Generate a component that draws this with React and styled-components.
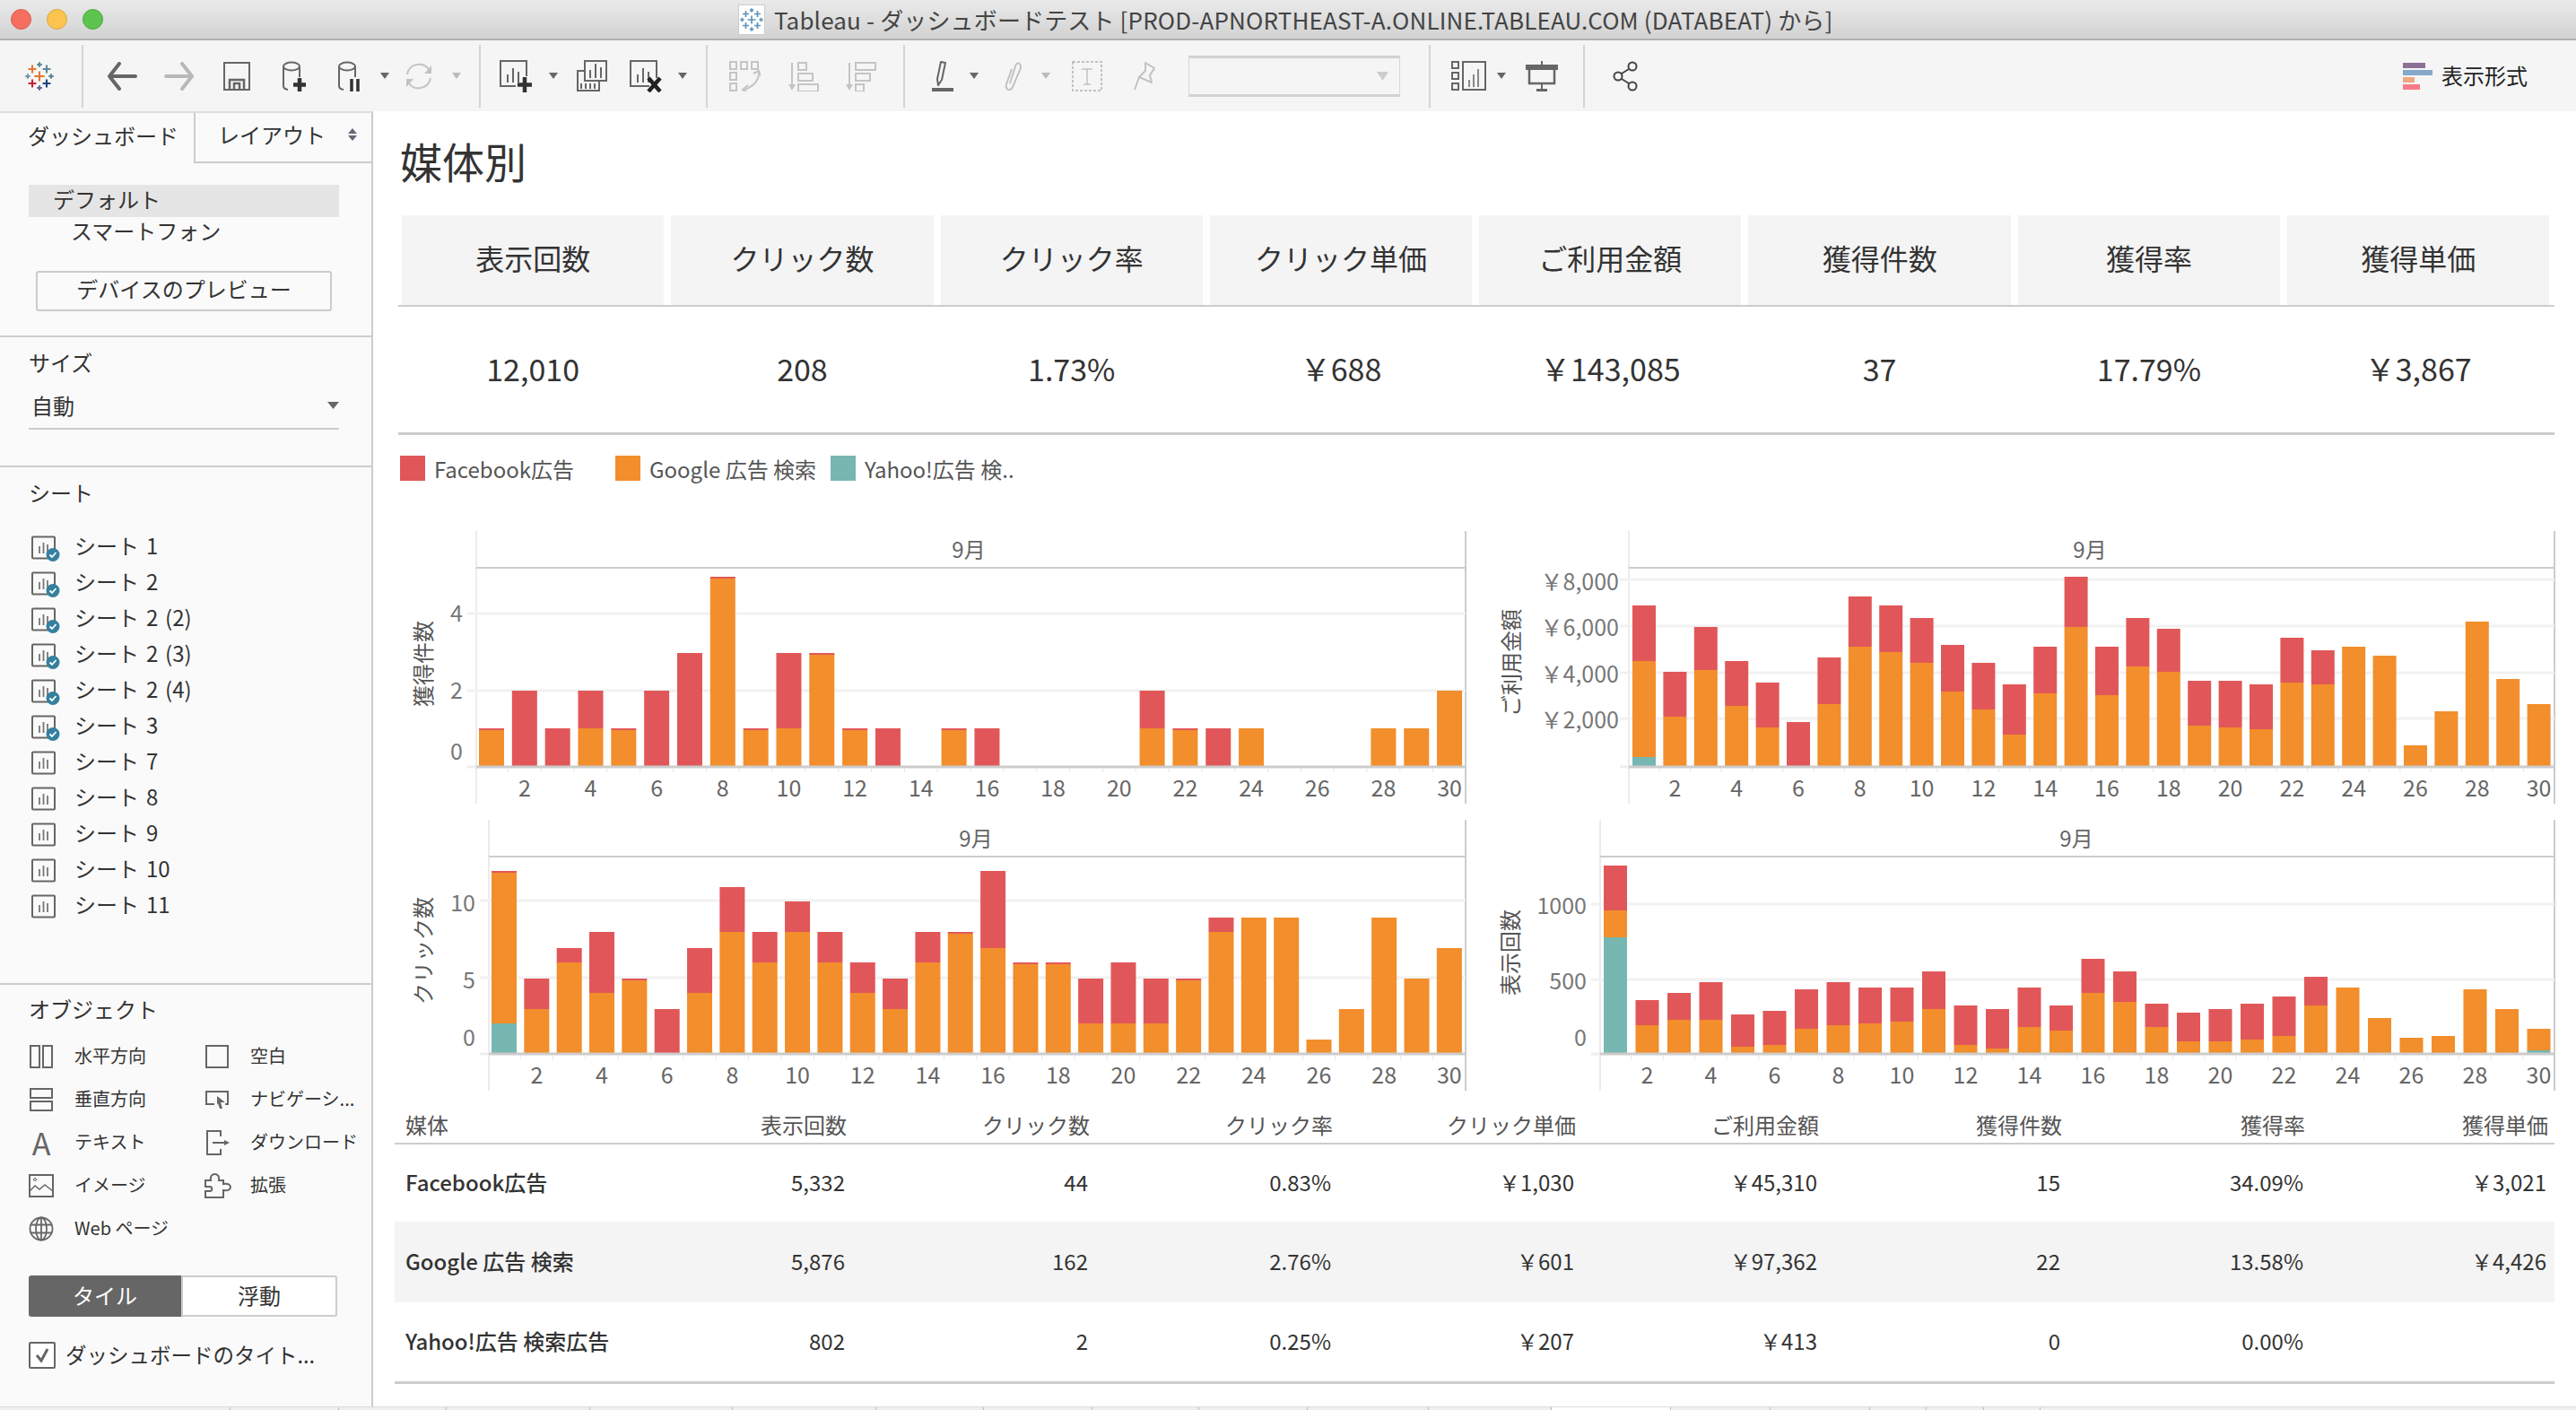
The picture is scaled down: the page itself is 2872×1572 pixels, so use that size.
import React from "react";
import styled, { createGlobalStyle } from "styled-components";

const FONT = '"Noto Sans CJK JP", "Noto Sans", sans-serif';
const RED = "#e15759";
const ORANGE = "#f28e2b";
const TEAL = "#76b7b2";

const GlobalStyle = createGlobalStyle`
  html, body {
    margin: 0;
    padding: 0;
    background: #fff;
  }
  * {
    box-sizing: border-box;
  }
  #root {
    width: 2872px;
    height: 1572px;
    overflow: hidden;
    font-family: ${FONT};
  }
`;

const Window = styled.div`
  width: 2872px;
  height: 1572px;
  display: flex;
  flex-direction: column;
  overflow: hidden;
  background: #fff;
  color: #333;
`;

const TitleBar = styled.div`
  height: 45px;
  flex: none;
  display: flex;
  align-items: center;
  background: linear-gradient(#eaeaea, #d2d2d2);
  border-bottom: 2px solid #b1b1b1;
  padding-left: 12px;
`;

const Light = styled.span`
  width: 23px;
  height: 23px;
  margin-right: 17px;
  border-radius: 50%;
  background: ${(p) => p.$color};
  border: 1px solid ${(p) => p.$edge};
`;

const TitleCenter = styled.div`
  display: flex;
  align-items: center;
  margin-left: 691px;
  font-size: 26px;
  letter-spacing: 0.15px;
  color: #444;
  white-space: nowrap;
`;

const TitleIcon = styled.span`
  width: 30px;
  height: 34px;
  margin-right: 10px;
  display: flex;
  align-items: center;
  justify-content: center;
  background: #fff;
  border: 1px solid #ccc;
`;

const Toolbar = styled.div`
  height: 79px;
  flex: none;
  display: flex;
  align-items: center;
  padding: 0 54px 0 28px;
  background: #f5f5f5;
`;

const Slot = styled.span`
  display: flex;
  flex: none;
  margin-left: ${(p) => p.$gap || 0}px;
`;

const ToolSep = styled.span`
  width: 2px;
  height: 70px;
  flex: none;
  margin-left: ${(p) => p.$gap}px;
  background: #d4d4d4;
`;

const SelectBox = styled.div`
  width: 236px;
  height: 46px;
  flex: none;
  margin-left: 36px;
  display: flex;
  align-items: center;
  justify-content: flex-end;
  padding-right: 12px;
  border: 1px solid #d8d8d8;
  border-top: 3px solid #d2d2d2;
  border-bottom: 3px solid #d2d2d2;
`;

const ShowMe = styled.div`
  margin-left: auto;
  display: flex;
  align-items: center;
  gap: 10px;
  font-size: 24px;
  color: #222;
`;

const ShowMeBars = styled.div`
  width: 33px;
  display: flex;
  flex-direction: column;
  gap: 2px;
`;

const ShowMeBar = styled.span`
  height: 6px;
  width: ${(p) => p.$w}px;
  background: ${(p) => p.$color};
`;

const ShowMeText = styled.span`
  padding-bottom: 3px;
`;

const Body = styled.div`
  flex: 1;
  display: flex;
  min-height: 0;
`;

const Sidebar = styled.aside`
  width: 416px;
  flex: none;
  background: #fafafa;
  border-top: 2px solid #ddd;
  border-right: 2px solid #ccc;
  font-size: 24px;
  color: #333;
`;

const TabRow = styled.div`
  display: flex;
  height: 56px;
`;

const ActiveTab = styled.div`
  width: 216px;
  padding: 0 0 7px 31px;
  display: flex;
  align-items: center;
`;

const Tab = styled.div`
  flex: 1;
  display: flex;
  align-items: center;
  justify-content: space-between;
  padding: 0 16px 7px 25px;
  border-left: 2px solid #ccc;
  border-bottom: 2px solid #ccc;
`;

const Section = styled.section`
  display: flow-root;
  padding-top: ${(p) => p.$top || 0}px;
  height: ${(p) => p.$h}px;
  border-bottom: 2px solid #ccc;
`;

const LastSection = styled.section`
  padding-top: 11px;
`;

const LayoutItem = styled.div`
  height: ${(p) => p.$h}px;
  margin: ${(p) => p.$mt}px 36px 0 32px;
  padding: 0 0 6px ${(p) => p.$indent}px;
  display: flex;
  align-items: center;
  background: ${(p) => (p.$selected ? "#e5e5e5" : "transparent")};
`;

const PreviewButton = styled.button`
  display: block;
  width: 330px;
  height: 45px;
  margin: 26px 0 0 40px;
  padding: 0 0 6px;
  border: 2px solid #ccc;
  border-radius: 3px;
  background: transparent;
  font: inherit;
  color: #333;
`;

const SectionLabel = styled.div`
  height: 34px;
  padding: 0 0 4px 32px;
  display: flex;
  align-items: center;
`;

const SizeSelect = styled.div`
  height: 49px;
  margin: 8px 36px 0 32px;
  padding: 0 0 4px 3px;
  display: flex;
  align-items: center;
  justify-content: space-between;
  border-bottom: 2px solid #ccc;
`;

const SheetList = styled.div`
  margin-top: 23px;
`;

const SheetRow = styled.div`
  height: 40px;
  padding-left: 35px;
  display: flex;
  align-items: center;
  gap: 16px;
  line-height: 36px;
`;

const SheetName = styled.span`
  padding-bottom: 4px;
  word-spacing: 2.5px;
`;

const ObjectGrid = styled.div`
  margin-top: 11px;
  display: grid;
  grid-template-columns: 196px 1fr;
  grid-auto-rows: 48px;
  padding-left: 32px;
`;

const ObjectItem = styled.div`
  display: flex;
  align-items: center;
  font-size: 20px;
  white-space: nowrap;
`;

const ObjectIcon = styled.span`
  width: 51px;
  flex: none;
  display: flex;
  align-items: center;
`;

const ObjectName = styled.span`
  padding-bottom: 3px;
`;

const LetterIcon = styled.span`
  width: 28px;
  text-align: center;
  font-size: 34px;
  line-height: 34px;
  color: #666;
`;

const ToggleRow = styled.div`
  display: flex;
  width: 344px;
  height: 46px;
  margin: 28px 0 0 32px;
`;

const ToggleButton = styled.div`
  flex: 1;
  display: flex;
  align-items: center;
  justify-content: center;
  padding-bottom: 3px;
  font-size: 24px;
  background: ${(p) => (p.$on ? "#666" : "#fff")};
  color: ${(p) => (p.$on ? "#fff" : "#333")};
  border: ${(p) => (p.$on ? "none" : "2px solid #ccc")};
  border-radius: ${(p) => (p.$on ? "3px 0 0 3px" : "0 3px 3px 0")};
`;

const CheckRow = styled.div`
  display: flex;
  align-items: center;
  gap: 11px;
  height: 30px;
  margin: 28px 0 0 32px;
  white-space: nowrap;
`;

const CheckBox = styled.span`
  width: 30px;
  height: 30px;
  display: flex;
  align-items: center;
  justify-content: center;
  background: #fff;
  border: 2px solid #666;
  border-radius: 2px;
`;

const CheckText = styled.span`
  font-size: 23.5px;
  padding-bottom: 3px;
`;

const Main = styled.main`
  flex: 1;
  min-width: 0;
  padding: 0 24px 0 28px;
  display: flex;
  flex-direction: column;
`;

const DashTitle = styled.h1`
  height: 116px;
  flex: none;
  margin: 0;
  padding: 0 0 8px 2px;
  display: flex;
  align-items: center;
  font-size: 47px;
  font-weight: 400;
  color: #333;
`;

const KpiRow = styled.div`
  display: grid;
  grid-template-columns: repeat(8, 292.3px);
  column-gap: 8px;
  padding-left: 4px;
  flex: none;
  height: ${(p) => p.$h}px;
  border-bottom: ${(p) => p.$line}px solid #ccc;
`;

const KpiHead = styled.div`
  display: flex;
  align-items: center;
  justify-content: center;
  padding-bottom: 7px;
  background: #f4f4f4;
  font-size: 32px;
  color: #333;
`;

const KpiValue = styled.div`
  display: flex;
  align-items: center;
  justify-content: center;
  padding-bottom: 3px;
  font-size: 34px;
  color: #333;
`;

const Legend = styled.div`
  display: flex;
  height: 28px;
  flex: none;
  margin: 23px 0 56px 2px;
`;

const LegendItem = styled.div`
  width: 240px;
  display: flex;
  align-items: center;
  gap: 10px;
  font-size: 24px;
  color: #555;
  white-space: nowrap;
`;

const Swatch = styled.span`
  width: 28px;
  height: 28px;
  background: ${(p) => p.$color};
`;

const ChartGrid = styled.div`
  display: grid;
  grid-template-columns: 1196px 1208px;
  grid-auto-rows: 322px;
  flex: none;
`;

const ChartSvg = styled.svg`
  display: block;
  font-family: ${FONT};
  overflow: visible;
`;

const AxisText = styled.text`
  font-size: ${(p) => p.$size || 25}px;
  fill: ${(p) => p.$color || "#666"};
  dominant-baseline: central;
`;

const Table = styled.div`
  margin-left: -4px;
  flex: none;
  font-size: 24px;
  color: #333;
`;

const TableRow = styled.div`
  display: grid;
  grid-template-columns: 233px repeat(8, 271px);
  align-items: center;
  height: ${(p) => p.$h}px;
  padding-bottom: ${(p) => (p.$head ? 4 : 3)}px;
  background: ${(p) => (p.$shade ? "#f4f4f4" : "transparent")};
  border-bottom: ${(p) => p.$line || 0}px solid #ccc;
  color: ${(p) => (p.$head ? "#555" : "#333")};
`;

const NameCell = styled.div`
  padding-left: 12px;
  white-space: nowrap;
  font-weight: ${(p) => (p.$head ? 400 : 500)};
`;

const NumCell = styled.div`
  text-align: right;
  padding-right: ${(p) => (p.$head ? 0 : 2)}px;
`;

const BottomStrip = styled.div`
  height: 4px;
  flex: none;
  display: flex;
  background: #efefef;
  border-top: 1px solid #ddd;
`;

const StripTab = styled.span`
  flex: none;
  border-right: 1px solid #bbb;
  background: ${(p) => (p.$active ? "#fff" : "transparent")};
`;

const Caret = ({ color = "#666", w = 10, h = 7 }) => (
  <svg width={w} height={h} viewBox="0 0 10 7" preserveAspectRatio="none">
    <path d="M0 0H10L5 7Z" fill={color} />
  </svg>
);

const LOGO_CROSSES = [
  [16, 3, 2.8, "#5b879b"],
  [8, 8, 4.4, "#e8762d"],
  [24, 8, 4.4, "#5b879b"],
  [16, 16, 5.6, "#e8762d"],
  [3, 16, 2.8, "#7099a6"],
  [29, 16, 2.8, "#59879b"],
  [8, 24, 4.4, "#c72035"],
  [24, 24, 4.4, "#1f457e"],
  [16, 29, 2.8, "#5c6692"],
];

const TableauLogo = ({ size = 32, mono }) => (
  <svg width={size} height={size} viewBox="0 0 32 32">
    {LOGO_CROSSES.map(([x, y, r, c]) => (
      <path
        key={`${x}-${y}`}
        d={`M${x - r} ${y}H${x + r}M${x} ${y - r}V${y + r}`}
        stroke={mono ? "#5d93bd" : c}
        strokeWidth="2.1"
      />
    ))}
  </svg>
);

const Back = ({ color, flip }) => (
  <svg width="34" height="32" viewBox="0 0 34 32" style={flip ? { transform: "scaleX(-1)" } : undefined}>
    <path d="M14 2L3 16L14 30M3 16H32" fill="none" stroke={color} strokeWidth="4" strokeLinecap="round" strokeLinejoin="round" />
  </svg>
);

const SaveIcon = () => (
  <svg width="30" height="32" viewBox="0 0 30 32" fill="none" stroke="#666">
    <rect x="1" y="1" width="28" height="30" strokeWidth="2" />
    <path d="M7 30V20H23V30" strokeWidth="2.5" />
    <path d="M12 30V24H18V30" strokeWidth="2.5" />
  </svg>
);

const Cylinder = () => (
  <>
    <ellipse cx="11" cy="6" rx="9" ry="4.5" fill="none" stroke="#666" strokeWidth="2" />
    <path d="M2 6V28Q2 31 7 32M20 6V18" fill="none" stroke="#666" strokeWidth="2" />
  </>
);

const SourcePlus = () => (
  <svg width="28" height="34" viewBox="0 0 28 34">
    <Cylinder />
    <path d="M20 19V34M13 26.5H27" stroke="#333" strokeWidth="4.5" />
  </svg>
);

const SourcePause = () => (
  <svg width="26" height="34" viewBox="0 0 26 34">
    <Cylinder />
    <path d="M16 20V34M23 20V34" stroke="#333" strokeWidth="3.5" />
  </svg>
);

const Refresh = () => (
  <svg width="32" height="32" viewBox="0 0 32 32" fill="none" stroke="#c2c2c2" strokeWidth="2">
    <path d="M3 14A13.5 13.5 0 0 1 27 8M29 18A13.5 13.5 0 0 1 5 24" />
    <path d="M30 4V13H22ZM2 28V19H10Z" fill="#c2c2c2" stroke="none" />
  </svg>
);

const Bars = ({ x, y, color = "#666" }) => (
  <path d={`M${x} ${y}v-9M${x + 6} ${y}v-16M${x + 12} ${y}v-12`} stroke={color} strokeWidth="2" />
);

const NewSheet = () => (
  <svg width="36" height="36" viewBox="0 0 36 36" fill="none">
    <path d="M18 29H1V1H30V18" stroke="#666" strokeWidth="2" />
    <Bars x={9} y={25} />
    <path d="M28 19V36M20 27.5H36" stroke="#333" strokeWidth="4.5" />
  </svg>
);

const DuplicateSheet = () => (
  <svg width="34" height="36" viewBox="0 0 34 36" fill="none">
    <path d="M8 12H1V34H25V24" stroke="#666" strokeWidth="2" />
    <path d="M5 32v-6M10 32v-6M15 32v-6M20 32v-6" stroke="#666" strokeWidth="2" />
    <rect x="9" y="1" width="24" height="22" stroke="#666" strokeWidth="2" fill="#f5f5f5" />
    <Bars x={15} y={20} />
  </svg>
);

const DeleteSheet = () => (
  <svg width="37" height="36" viewBox="0 0 37 36" fill="none">
    <path d="M22 29H1V1H30V20" stroke="#666" strokeWidth="2" />
    <Bars x={9} y={25} />
    <path d="M21 20L34 35M34 20L21 35" stroke="#222" strokeWidth="4.5" />
  </svg>
);

const SwapIcon = () => (
  <svg width="35" height="34" viewBox="0 0 35 34" fill="none" stroke="#c4c4c4" strokeWidth="2">
    <rect x="1" y="1" width="7" height="8" />
    <rect x="13" y="1" width="7" height="8" />
    <rect x="25" y="1" width="7" height="8" />
    <rect x="1" y="13" width="7" height="8" />
    <rect x="1" y="25" width="7" height="8" />
    <path d="M33 13Q33 26 17 32" />
    <path d="M27 14L33 11L35 17M21 27L15 32L20 35" />
  </svg>
);

const SortIcon = ({ widths }) => (
  <svg width="34" height="34" viewBox="0 0 34 34" fill="none" stroke="#c4c4c4" strokeWidth="2">
    <path d="M4 2V30" />
    <path d="M0 26H8L4 33Z" fill="#c4c4c4" stroke="none" />
    {widths.map((w, i) => (
      <rect key={w} x="11" y={2 + i * 12} width={w} height="8" />
    ))}
  </svg>
);

const PenIcon = () => (
  <svg width="24" height="34" viewBox="0 0 24 34" fill="none">
    <path d="M10 1L6 20L7 27L11 21L15 2Z" stroke="#666" strokeWidth="2" strokeLinejoin="round" />
    <rect y="30" width="24" height="4" fill="#666" />
  </svg>
);

const ClipIcon = () => (
  <svg width="24" height="34" viewBox="0 0 24 34" fill="none" stroke="#bdbdbd" strokeWidth="1.8">
    <path d="M9 25L15 6Q16.5 1.5 19 2.5Q22 4 20.5 9L12 29Q10 33 7 32Q4 31 5 26L11 9" />
  </svg>
);

const TextBoxIcon = () => (
  <svg width="34" height="34" viewBox="0 0 34 34" fill="none" stroke="#c2c2c2" strokeWidth="2">
    <rect x="1" y="1" width="32" height="32" strokeDasharray="3 2" />
    <path d="M11 9H23M17 9V26M13 26H21" strokeWidth="1.5" />
  </svg>
);

const PinIcon = () => (
  <svg width="26" height="34" viewBox="0 0 26 34" fill="none" stroke="#c2c2c2" strokeWidth="2">
    <path d="M14 2L24 8L19 16L21 24L7 18L14 11ZM7 18L2 32" strokeLinejoin="round" />
  </svg>
);

const FitIcon = () => (
  <svg width="39" height="34" viewBox="0 0 39 34" fill="none" stroke="#666" strokeWidth="2">
    <rect x="1" y="1" width="7" height="7" />
    <rect x="1" y="13" width="7" height="7" />
    <rect x="1" y="25" width="7" height="7" />
    <rect x="13" y="1" width="25" height="31" />
    <path d="M20 29v-8M25 29v-14M30 29v-20" strokeWidth="1.5" />
  </svg>
);

const PresentIcon = () => (
  <svg width="36" height="34" viewBox="0 0 36 34" fill="none">
    <rect y="4" width="36" height="6" fill="#666" />
    <path d="M4 10V25H32V10" stroke="#666" strokeWidth="2.5" />
    <path d="M18 0V4M18 25V32" stroke="#666" strokeWidth="2" />
    <rect x="12" y="31" width="12" height="3" fill="#666" />
  </svg>
);

const ShareIcon = () => (
  <svg width="30" height="34" viewBox="0 0 30 34" fill="none" stroke="#444" strokeWidth="2">
    <circle cx="23" cy="6" r="4.5" />
    <circle cx="7" cy="17" r="4.5" />
    <circle cx="23" cy="28" r="4.5" />
    <path d="M11 14L19 9M11 20L19 25" />
  </svg>
);

const SheetIcon = ({ checked }) => (
  <svg width="32" height="32" viewBox="0 0 32 32" fill="none">
    <rect x="1" y="4.5" width="25" height="24" stroke="#666" strokeWidth="2" rx="1" />
    <path d="M9 23v-8M13.5 23v-12M18 23v-10" stroke="#777" strokeWidth="1.8" />
    {checked && (
      <>
        <circle cx="24" cy="24.5" r="7.5" fill="#35809f" />
        <path d="M20.5 24.5L23 27L27.5 22" stroke="#fff" strokeWidth="1.8" />
      </>
    )}
  </svg>
);

const SplitIcon = ({ vertical }) => (
  <svg width="28" height="28" viewBox="0 0 28 28" fill="none" stroke="#666" strokeWidth="2">
    {vertical ? (
      <>
        <rect x="2" y="2" width="24" height="10" />
        <rect x="2" y="16" width="24" height="10" />
      </>
    ) : (
      <>
        <rect x="2" y="2" width="10" height="24" />
        <rect x="16" y="2" width="10" height="24" />
      </>
    )}
  </svg>
);

const BlankIcon = () => (
  <svg width="28" height="28" viewBox="0 0 28 28" fill="none" stroke="#666" strokeWidth="2">
    <rect x="2" y="2" width="24" height="24" />
  </svg>
);

const NavIcon = () => (
  <svg width="28" height="24" viewBox="0 0 28 24" fill="none">
    <path d="M11 17H2V3H26V17H23" stroke="#666" strokeWidth="2" />
    <path d="M14 8L23 15H18L20 22L17 22L15 16L14 18Z" fill="#666" />
  </svg>
);

const DownloadIcon = () => (
  <svg width="28" height="30" viewBox="0 0 28 30" fill="none" stroke="#666" strokeWidth="2">
    <path d="M18 8V2H3V28H18V22" />
    <path d="M9 15H23" />
    <path d="M22 12L28 15L22 18Z" fill="#666" stroke="none" />
  </svg>
);

const ImageIcon = () => (
  <svg width="28" height="26" viewBox="0 0 28 26" fill="none" stroke="#666" strokeWidth="2">
    <rect x="1" y="1" width="26" height="24" />
    <path d="M1 19L7 13L12 17L18 12L27 19" strokeWidth="1.5" />
    <circle cx="7" cy="6" r="1.5" strokeWidth="1" />
  </svg>
);

const PuzzleIcon = () => (
  <svg width="30" height="29" viewBox="0 0 30 29" fill="none" stroke="#666" strokeWidth="2">
    <path d="M1 8H7C6 3 9 1 11.5 1S17 3 16 8H21V12C26 11 29 13 29 15.5S26 20 21 19V27H1V20H6C9 20 9 15 6 15H1Z" />
  </svg>
);

const GlobeIcon = () => (
  <svg width="28" height="28" viewBox="0 0 28 28" fill="none" stroke="#666" strokeWidth="1.8">
    <circle cx="14" cy="14" r="12.5" />
    <ellipse cx="14" cy="14" rx="6" ry="12.5" />
    <path d="M14 1.5V26.5M2.5 9.5H25.5M2.5 18.5H25.5" />
  </svg>
);

const CheckMark = () => (
  <svg width="18" height="18" viewBox="0 0 18 18" fill="none">
    <path d="M3 9L8 15L15 2" stroke="#666" strokeWidth="3" />
  </svg>
);

const SortArrows = () => (
  <svg width="10" height="14" viewBox="0 0 10 14">
    <path d="M0 6L5 0L10 6ZM0 8H10L5 14Z" fill="#667" />
  </svg>
);

const SHEETS = [
  ["シート 1", true],
  ["シート 2", true],
  ["シート 2 (2)", true],
  ["シート 2 (3)", true],
  ["シート 2 (4)", true],
  ["シート 3", true],
  ["シート 7", false],
  ["シート 8", false],
  ["シート 9", false],
  ["シート 10", false],
  ["シート 11", false],
];

const HEADINGS = ["表示回数", "クリック数", "クリック率", "クリック単価", "ご利用金額", "獲得件数", "獲得率", "獲得単価"];
const TOTALS = ["12,010", "208", "1.73%", "\uFFE5688", "\uFFE5143,085", "37", "17.79%", "\uFFE53,867"];
const ROWS = [
  ["Facebook広告", "5,332", "44", "0.83%", "\uFFE51,030", "\uFFE545,310", "15", "34.09%", "\uFFE53,021"],
  ["Google 広告 検索", "5,876", "162", "2.76%", "\uFFE5601", "\uFFE597,362", "22", "13.58%", "\uFFE54,426"],
  ["Yahoo!広告 検索広告", "802", "2", "0.25%", "\uFFE5207", "\uFFE5413", "0", "0.00%", ""],
];

// bar stacks are cumulative pixel heights: teal, orange, red
const only = (o) => [0, o, o];
const red = (r) => [0, 0, r];
const both = (o, r) => [0, o, r];
const NONE = [0, 0, 0];

const ACQUIRED = [
  both(40, 42), red(84), red(42), both(42, 84), both(40, 42), red(84), red(126), both(209, 211), both(40, 42), both(42, 126),
  both(124, 126), both(40, 42), red(42), NONE, both(40, 42), red(42), NONE, NONE, NONE, NONE,
  both(42, 84), both(40, 42), red(42), only(42), NONE, NONE, NONE, only(42), only(42), only(84),
];
const SPEND = [
  [10, 117, 179], both(55, 105), both(107, 155), both(67, 117), both(43, 93), red(49), both(69, 121), both(133, 189), both(127, 179), both(115, 165),
  both(83, 135), both(63, 115), both(35, 91), both(81, 133), both(155, 211), both(79, 133), both(111, 165), both(105, 153), both(45, 95), both(43, 95),
  both(41, 91), both(93, 143), both(91, 129), only(133), only(123), only(23), only(61), only(161), only(97), only(69),
];
const CLICKS = [
  [33, 201, 203], both(49, 83), both(101, 117), both(67, 135), both(81, 83), red(49), both(67, 117), both(135, 185), both(101, 135), both(135, 169),
  both(101, 135), both(67, 101), both(49, 83), both(101, 135), both(133, 135), both(117, 203), both(99, 101), both(99, 101), both(33, 83), both(33, 101),
  both(33, 83), both(81, 83), both(135, 151), only(151), only(151), only(15), only(49), only(151), only(83), only(117),
];
const IMPRESSIONS = [
  [129, 159, 209], both(31, 59), both(37, 67), both(37, 79), both(7, 43), both(9, 47), both(27, 71), both(31, 79), both(33, 73), both(35, 73),
  both(49, 91), both(9, 53), both(5, 49), both(29, 73), both(25, 53), both(67, 105), both(57, 91), both(29, 55), both(13, 45), both(13, 49),
  both(15, 55), both(19, 63), both(53, 85), only(73), only(39), only(17), only(19), only(71), only(49), [3, 27, 27],
];

const CHARTS = [
  {
    title: "獲得件数", data: ACQUIRED, width: 1196, axis: 87, right: 1190, start: 90, pitch: 36.83, bar: 28, base: 262,
    grid: [92, 178], ticks: [["4", 90], ["2", 176], ["0", 244]], labelX: 72, titleX: 26, titleY: 148, monthX: 636,
  },
  {
    title: "ご利用金額", data: SPEND, width: 1208, axis: 176, right: 1208, start: 180, pitch: 34.4, bar: 26, base: 262,
    grid: [54, 106, 158, 209], ticks: [["\uFFE58,000", 55], ["\uFFE56,000", 106], ["\uFFE54,000", 158], ["\uFFE52,000", 209]], labelX: 165, titleX: 43, titleY: 147, monthX: 690,
  },
  {
    title: "クリック数", data: CLICKS, width: 1196, axis: 101, right: 1190, start: 104, pitch: 36.34, bar: 28, base: 260,
    grid: [90, 176], ticks: [["10", 91], ["5", 177], ["0", 241]], labelX: 86, titleX: 26, titleY: 146, monthX: 644,
  },
  {
    title: "表示回数", data: IMPRESSIONS, width: 1208, axis: 144, right: 1208, start: 148, pitch: 35.5, bar: 26, base: 260,
    grid: [94, 178], ticks: [["1000", 94], ["500", 178], ["0", 241]], labelX: 129, titleX: 42, titleY: 148, monthX: 675,
  },
];

const BarChart = ({ title, data, width, axis, right, start, pitch, bar, base, grid, ticks, labelX, titleX, titleY, monthX }) => (
  <ChartSvg width={width} height={322} viewBox={`0 0 ${width} 322`}>
    <line x1={axis} y1="0" x2={axis} y2={base + 42} stroke="#d8d8d8" strokeWidth="1" />
    <line x1={right} y1="0" x2={right} y2={base + 42} stroke="#ccc" strokeWidth="2" />
    <line x1={axis} y1="41" x2={right} y2="41" stroke="#ccc" strokeWidth="2" />
    <AxisText x={monthX} y="19" textAnchor="middle" $size={24}>9月</AxisText>
    <AxisText
      x={titleX}
      y={titleY}
      textAnchor="middle"
      $size={24}
      $color="#555"
      transform={`rotate(-90 ${titleX} ${titleY})`}
    >
      {title}
    </AxisText>
    {grid.map((y) => (
      <line key={y} x1={axis - 10} y1={y} x2={right} y2={y} stroke="#f1f1f1" strokeWidth="3" />
    ))}
    {ticks.map(([text, y]) => (
      <AxisText key={text} x={labelX} y={y} textAnchor="end" $color="#777">{text}</AxisText>
    ))}
    {data.map(([t, o, r], i) => {
      const x = start + i * pitch;
      return (
        <g key={i}>
          {t > 0 && <rect x={x} y={base - t} width={bar} height={t} fill={TEAL} />}
          {o > t && <rect x={x} y={base - o} width={bar} height={o - t} fill={ORANGE} />}
          {r > o && <rect x={x} y={base - r} width={bar} height={r - o} fill={RED} />}
          {i > 0 && (
            <line x1={x - (pitch - bar) / 2} y1={base + 3} x2={x - (pitch - bar) / 2} y2={base + 7} stroke="#e4e4e4" />
          )}
          {(i + 1) % 2 === 0 && (
            <AxisText x={x + bar / 2} y={base + 23} textAnchor="middle">{i + 1}</AxisText>
          )}
        </g>
      );
    })}
    <line x1={axis - 10} y1={base + 1} x2={axis} y2={base + 1} stroke="#eee" strokeWidth="3" />
    <line x1={axis} y1={base + 1} x2={right} y2={base + 1} stroke="#ccc" strokeWidth="3" />
  </ChartSvg>
);

const STRIP_EDGES = [257, 378, 498, 658, 817, 977, 1097, 1218, 1337, 1458, 1593, 1730, 1863, 1974, 2085, 2148, 2212, 2275];

const OBJECTS = [
  ["水平方向", <SplitIcon />],
  ["空白", <BlankIcon />],
  ["垂直方向", <SplitIcon vertical />],
  ["ナビゲーシ...", <NavIcon />],
  ["テキスト", <LetterIcon>A</LetterIcon>],
  ["ダウンロード", <DownloadIcon />],
  ["イメージ", <ImageIcon />],
  ["拡張", <PuzzleIcon />],
  ["Web ページ", <GlobeIcon />],
];

export default function App() {
  return (
    <Window>
      <GlobalStyle />
      <TitleBar>
        <Light $color="#f46f60" $edge="#de5a4c" />
        <Light $color="#fac44f" $edge="#dfa63e" />
        <Light $color="#5cc44f" $edge="#4aa83f" />
        <TitleCenter>
          <TitleIcon><TableauLogo size={26} mono /></TitleIcon>
          Tableau - ダッシュボードテスト [PROD-APNORTHEAST-A.ONLINE.TABLEAU.COM (DATABEAT) から]
        </TitleCenter>
      </TitleBar>

      <Toolbar>
        <Slot><TableauLogo /></Slot>
        <ToolSep $gap={31} />
        <Slot $gap={26}><Back color="#666" /></Slot>
        <Slot $gap={30}><Back color="#b8b8b8" flip /></Slot>
        <Slot $gap={32}><SaveIcon /></Slot>
        <Slot $gap={35}><SourcePlus /></Slot>
        <Slot $gap={34}><SourcePause /></Slot>
        <Slot $gap={22}><Caret /></Slot>
        <Slot $gap={17}><Refresh /></Slot>
        <Slot $gap={21}><Caret color="#bbb" /></Slot>
        <ToolSep $gap={20} />
        <Slot $gap={21}><NewSheet /></Slot>
        <Slot $gap={19}><Caret /></Slot>
        <Slot $gap={21}><DuplicateSheet /></Slot>
        <Slot $gap={25}><DeleteSheet /></Slot>
        <Slot $gap={17}><Caret /></Slot>
        <ToolSep $gap={21} />
        <Slot $gap={24}><SwapIcon /></Slot>
        <Slot $gap={31}><SortIcon widths={[9, 16, 22]} /></Slot>
        <Slot $gap={30}><SortIcon widths={[22, 16, 9]} /></Slot>
        <ToolSep $gap={30} />
        <Slot $gap={30}><PenIcon /></Slot>
        <Slot $gap={18}><Caret /></Slot>
        <Slot $gap={26}><ClipIcon /></Slot>
        <Slot $gap={20}><Caret color="#bbb" /></Slot>
        <Slot $gap={24}><TextBoxIcon /></Slot>
        <Slot $gap={34}><PinIcon /></Slot>
        <SelectBox><Caret color="#ccc" w={13} h={10} /></SelectBox>
        <ToolSep $gap={32} />
        <Slot $gap={23}><FitIcon /></Slot>
        <Slot $gap={12}><Caret /></Slot>
        <Slot $gap={22}><PresentIcon /></Slot>
        <ToolSep $gap={28} />
        <Slot $gap={30}><ShareIcon /></Slot>
        <ShowMe>
          <ShowMeBars>
            <ShowMeBar $w={25} $color="#8c7197" />
            <ShowMeBar $w={33} $color="#86a8cb" />
            <ShowMeBar $w={13} $color="#f0a783" />
            <ShowMeBar $w={19} $color="#f77b86" />
          </ShowMeBars>
          <ShowMeText>表示形式</ShowMeText>
        </ShowMe>
      </Toolbar>

      <Body>
        <Sidebar>
          <TabRow>
            <ActiveTab>ダッシュボード</ActiveTab>
            <Tab>レイアウト<SortArrows /></Tab>
          </TabRow>

          <Section $h={194}>
            <LayoutItem $h={36} $mt={24} $indent={27} $selected>デフォルト</LayoutItem>
            <LayoutItem $h={34} $mt={0} $indent={47}>スマートフォン</LayoutItem>
            <PreviewButton>デバイスのプレビュー</PreviewButton>
          </Section>

          <Section $h={145} $top={12}>
            <SectionLabel>サイズ</SectionLabel>
            <SizeSelect>
              自動
              <Caret w={13} h={8} />
            </SizeSelect>
          </Section>

          <Section $h={577} $top={12}>
            <SectionLabel>シート</SectionLabel>
            <SheetList>
              {SHEETS.map(([name, checked]) => (
                <SheetRow key={name}>
                  <SheetIcon checked={checked} />
                  <SheetName>{name}</SheetName>
                </SheetRow>
              ))}
            </SheetList>
          </Section>

          <LastSection>
            <SectionLabel>オブジェクト</SectionLabel>
            <ObjectGrid>
              {OBJECTS.map(([name, icon]) => (
                <ObjectItem key={name}>
                  <ObjectIcon>{icon}</ObjectIcon>
                  <ObjectName>{name}</ObjectName>
                </ObjectItem>
              ))}
            </ObjectGrid>
            <ToggleRow>
              <ToggleButton $on>タイル</ToggleButton>
              <ToggleButton>浮動</ToggleButton>
            </ToggleRow>
            <CheckRow>
              <CheckBox><CheckMark /></CheckBox>
              <CheckText>ダッシュボードのタイト...</CheckText>
            </CheckRow>
          </LastSection>
        </Sidebar>

        <Main>
          <DashTitle>媒体別</DashTitle>
          <KpiRow $h={102} $line={2}>
            {HEADINGS.map((h) => <KpiHead key={h}>{h}</KpiHead>)}
          </KpiRow>
          <KpiRow $h={143} $line={3}>
            {TOTALS.map((v) => <KpiValue key={v}>{v}</KpiValue>)}
          </KpiRow>
          <Legend>
            <LegendItem><Swatch $color={RED} />Facebook広告</LegendItem>
            <LegendItem><Swatch $color={ORANGE} />Google 広告 検索</LegendItem>
            <LegendItem><Swatch $color={TEAL} />Yahoo!広告 検..</LegendItem>
          </Legend>
          <ChartGrid>
            {CHARTS.map((c) => <BarChart key={c.title} {...c} />)}
          </ChartGrid>
          <Table>
            <TableRow $h={40} $line={2} $head>
              <NameCell $head>媒体</NameCell>
              {HEADINGS.map((h) => <NumCell key={h} $head>{h}</NumCell>)}
            </TableRow>
            {ROWS.map(([name, ...cells], r) => (
              <TableRow key={name} $h={[86, 90, 91][r]} $shade={r === 1} $line={r === 2 ? 3 : 0}>
                <NameCell>{name}</NameCell>
                {cells.map((c, i) => <NumCell key={i}>{c}</NumCell>)}
              </TableRow>
            ))}
          </Table>
        </Main>
      </Body>

      <BottomStrip>
        {STRIP_EDGES.map((edge, i) => (
          <StripTab
            key={edge}
            style={{ width: edge - (i ? STRIP_EDGES[i - 1] : 0) }}
            $active={edge === 1863}
          />
        ))}
      </BottomStrip>
    </Window>
  );
}
